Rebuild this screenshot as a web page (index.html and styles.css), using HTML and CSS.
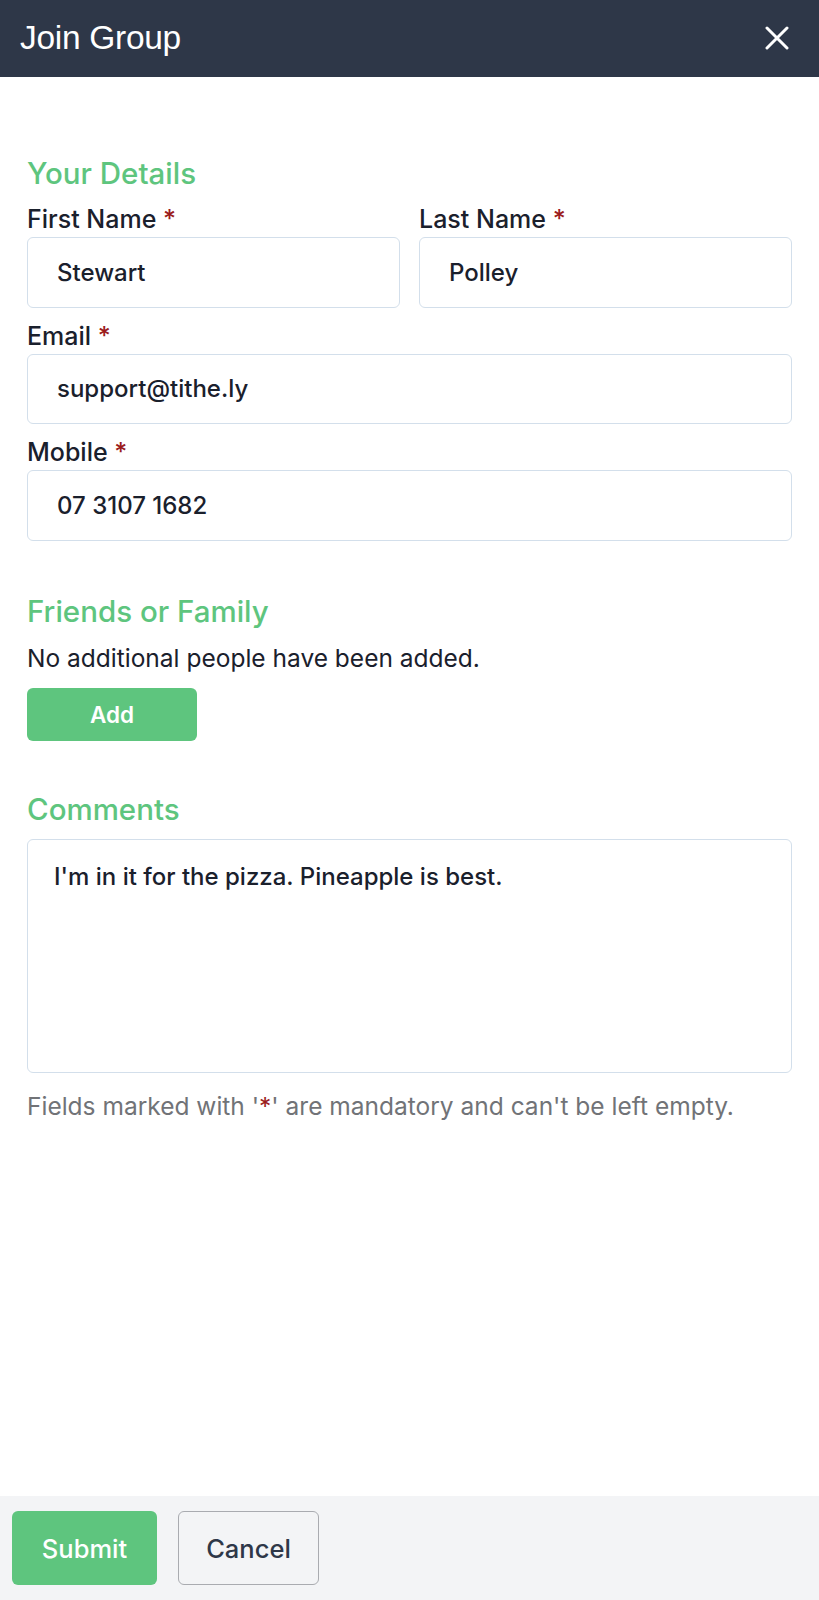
FILE: index.html
```html
<!DOCTYPE html>
<html lang="en">
<head>
<meta charset="utf-8">
<title>Join Group</title>
<link rel="stylesheet" href="styles.css">
</head>
<body>
<div class="page">
  <header class="topbar">
    <h1 class="topbar-title">Join Group</h1>
    <button class="close-btn" aria-label="Close">
      <svg width="24" height="24" viewBox="0 0 24 24"><path d="M2 2 L22 22 M22 2 L2 22" stroke="#ffffff" stroke-width="3" stroke-linecap="round"/></svg>
    </button>
  </header>
  <main class="content">
    <h2 class="section-title first">Your Details</h2>
    <div class="row-two">
      <div class="field">
        <label class="label">First Name <span class="req">*</span></label>
        <div class="input">Stewart</div>
      </div>
      <div class="field">
        <label class="label">Last Name <span class="req">*</span></label>
        <div class="input">Polley</div>
      </div>
    </div>
    <div class="field">
      <label class="label">Email <span class="req">*</span></label>
      <div class="input">support@tithe.ly</div>
    </div>
    <div class="field">
      <label class="label">Mobile <span class="req">*</span></label>
      <div class="input">07 3107 1682</div>
    </div>

    <h2 class="section-title friends">Friends or Family</h2>
    <p class="plain">No additional people have been added.</p>
    <button class="btn-add">Add</button>

    <h2 class="section-title comments">Comments</h2>
    <div class="textarea">I'm in it for the pizza. Pineapple is best.</div>
    <p class="note">Fields marked with '<span class="req">*</span>' are mandatory and can't be left empty.</p>
  </main>
  <footer class="footer">
    <button class="btn-submit">Submit</button>
    <button class="btn-cancel">Cancel</button>
  </footer>
</div>
</body>
</html>
```
FILE: styles.css
```css
* { box-sizing: border-box; }
html, body { margin: 0; padding: 0; }
body {
  font-family: Inter, "Noto Sans", sans-serif;
  color: #1a202c;
  background: #ffffff;
}
.page {
  min-height: 1600px;
  display: flex;
  flex-direction: column;
}
.topbar {
  height: 77px;
  background: #2e3748;
  display: flex;
  align-items: center;
  justify-content: space-between;
  padding: 0 30px 0 20px;
}
.topbar-title {
  margin: 0 0 2px;
  font-family: "Liberation Sans", Arial, sans-serif;
  font-weight: 400;
  font-size: 33.5px;
  color: #ffffff;
  letter-spacing: -0.3px;
}
.close-btn {
  background: none;
  border: 0;
  padding: 0;
  width: 24px;
  height: 24px;
  display: flex;
  margin-bottom: 2px;
}
.content {
  flex: 1;
  padding: 0 27px;
}
.section-title {
  margin: 0;
  font-size: 29.5px;
  font-weight: 500;
  color: #5ec57e;
  line-height: 36px;
}
.section-title.first { margin-top: 78px; }
.section-title.friends { margin-top: 52px; }
.section-title.comments { margin-top: 50px; }
.row-two {
  display: grid;
  grid-template-columns: 1fr 1fr;
  gap: 19px;
}
.field { display: flex; flex-direction: column; }
.label {
  font-size: 25px;
  font-weight: 500;
  line-height: 28px;
  margin: 14px 0 4px;
  display: block;
}
.req { color: #9b1c1c; }
.input {
  height: 70.5px;
  border: 1.5px solid #d3dfeb;
  border-radius: 6px;
  padding: 0 29px;
  display: flex;
  align-items: center;
  font-size: 24px;
  font-weight: 500;
}
.plain {
  margin: 14px 0 0;
  font-size: 24.5px;
  line-height: 30px;
}
.btn-add {
  display: block;
  margin-top: 15px;
  width: 170px;
  height: 53px;
  background: #5ec57e;
  color: #ffffff;
  border: 0;
  border-radius: 6px;
  font-family: Inter, sans-serif;
  font-size: 22.5px;
  font-weight: 600;
}
.textarea {
  margin-top: 12.6px;
  height: 233.6px;
  border: 1.5px solid #d3dfeb;
  border-radius: 6px;
  padding: 22px 26px;
  font-size: 24px;
  font-weight: 500;
  line-height: 30px;
}
.note {
  margin: 18.7px 0 0;
  font-size: 24.5px;
  color: #717377;
  line-height: 30px;
}
.footer {
  height: 104px;
  background: #f3f4f6;
  display: flex;
  align-items: center;
  gap: 21px;
  padding: 0 12px;
}
.btn-submit, .btn-cancel {
  height: 73.5px;
  border-radius: 6px;
  font-family: Inter, sans-serif;
  font-size: 25.5px;
  font-weight: 500;
}
.btn-submit {
  width: 145px;
  background: #5ec57e;
  color: #ffffff;
  border: 0;
}
.btn-cancel {
  width: 141px;
  background: #f3f4f6;
  color: #2e3748;
  border: 1.5px solid #a9abb0;
}
```
